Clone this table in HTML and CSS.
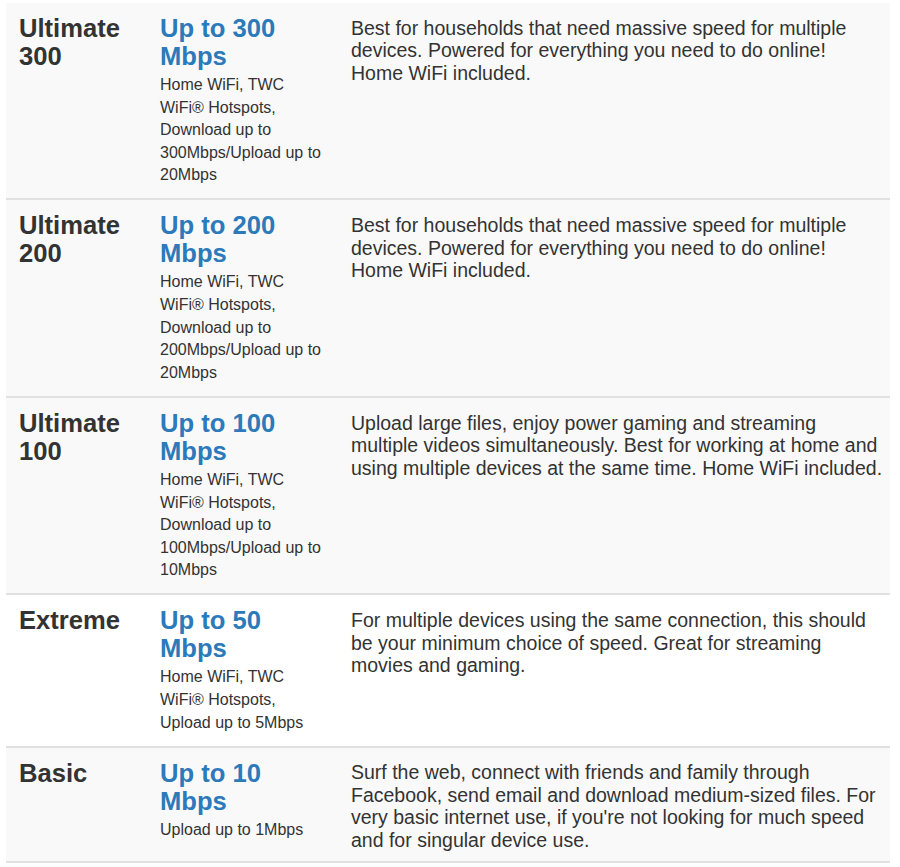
FILE: index.html
```html
<!DOCTYPE html>
<html>
<head>
<meta charset="utf-8">
<link rel="stylesheet" href="styles.css">
</head>
<body>
<div class="plans">
  <div class="row shaded">
    <div class="name">Ultimate 300</div>
    <div class="speed">
      <div class="speed-title">Up to 300 Mbps</div>
      <div class="speed-detail">Home WiFi, TWC WiFi® Hotspots, Download up to 300Mbps/Upload up to 20Mbps</div>
    </div>
    <div class="desc">Best for households that need massive speed for multiple devices. Powered for everything you need to do online! Home WiFi included.</div>
  </div>
  <div class="row shaded">
    <div class="name">Ultimate 200</div>
    <div class="speed">
      <div class="speed-title">Up to 200 Mbps</div>
      <div class="speed-detail">Home WiFi, TWC WiFi® Hotspots, Download up to 200Mbps/Upload up to 20Mbps</div>
    </div>
    <div class="desc">Best for households that need massive speed for multiple devices. Powered for everything you need to do online! Home WiFi included.</div>
  </div>
  <div class="row shaded">
    <div class="name">Ultimate 100</div>
    <div class="speed">
      <div class="speed-title">Up to 100 Mbps</div>
      <div class="speed-detail">Home WiFi, TWC WiFi® Hotspots, Download up to 100Mbps/Upload up to 10Mbps</div>
    </div>
    <div class="desc">Upload large files, enjoy power gaming and streaming multiple videos simultaneously. Best for working at home and using multiple devices at the same time. Home WiFi included.</div>
  </div>
  <div class="row">
    <div class="name">Extreme</div>
    <div class="speed">
      <div class="speed-title">Up to 50 Mbps</div>
      <div class="speed-detail">Home WiFi, TWC WiFi® Hotspots, Upload up to 5Mbps</div>
    </div>
    <div class="desc">For multiple devices using the same connection, this should be your minimum choice of speed. Great for streaming movies and gaming.</div>
  </div>
  <div class="row shaded">
    <div class="name">Basic</div>
    <div class="speed">
      <div class="speed-title">Up to 10 Mbps</div>
      <div class="speed-detail">Upload up to 1Mbps</div>
    </div>
    <div class="desc">Surf the web, connect with friends and family through Facebook, send email and download medium-sized files. For very basic internet use, if you're not looking for much speed and for singular device use.</div>
  </div>
</div>
</body>
</html>
```
FILE: styles.css
```css
html, body {
  margin: 0;
  padding: 0;
  background: #ffffff;
}
body {
  font-family: "Liberation Sans", Arial, Helvetica, sans-serif;
  color: #333333;
}
.plans {
  margin: 3px 10px 0 6px;
  width: 884px;
}
.row {
  display: grid;
  grid-template-columns: 141px 191px 1fr;
  background: #ffffff;
  border-bottom: 2px solid #e1e1e1;
}
.row.shaded {
  background: #f9f9f9;
}
.name {
  padding: 11px 13px 11.5px 13px;
  font-size: 25.6px;
  line-height: 28px;
  font-weight: bold;
  color: #333333;
}
.speed {
  padding: 11px 13px 11.5px 13px;
}
.speed-title {
  font-size: 25.6px;
  line-height: 28px;
  font-weight: bold;
  color: #2c7ab9;
}
.speed-detail {
  margin-top: 4px;
  font-size: 16px;
  line-height: 22.6px;
  color: #333333;
}
.desc {
  padding: 13.6px 7px 10px 13px;
  font-size: 19.5px;
  line-height: 22.5px;
  color: #333333;
}
```
